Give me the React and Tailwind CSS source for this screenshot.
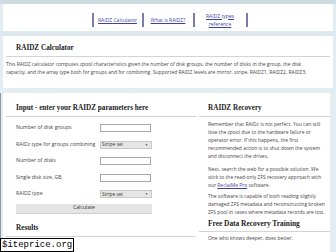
const FormRow = ({ label, children }) => (
  <div className="flex items-center h-[16.5px]">
    <span className="w-[84px] shrink-0">{label}</span>
    {children}
  </div>
);

const TextBox = () => (
  <div className="w-[51px] h-[8px] bg-white border border-[#a8a8a8]"></div>
);

const SelectBox = ({ value }) => (
  <div className="w-[52px] h-[8px] bg-[#e6e6e6] border border-[#c8c8c8] flex items-center justify-between pl-[1px] pr-[3px] text-[4.8px] text-[#333]">
    <span>{value}</span>
    <span className="text-[3px]">▼</span>
  </div>
);

const NavLink = ({ w, children }) => (
  <div className={`${w} h-[14px] border-l-2 border-[#7d7ca9] flex items-center justify-center text-center`}>
    <span className="underline text-[#3f3fa0] leading-[8px]">{children}</span>
  </div>
);

export default function App() {
  return (
    <div className="relative w-[336px] h-[252px] overflow-hidden bg-[#e3edf2] font-['Open_Sans',sans-serif] text-[4.95px] text-[#444]">
      <div className="h-[4px] bg-[#cddbe3]"></div>

      {/* nav */}
      <div className="mx-[3px] h-[27px] bg-white flex items-center justify-center pl-[3px]">
        <div className="flex items-center mt-[4px] border-r-2 border-[#7d7ca9] h-[14px] text-[5px]">
          <NavLink w="w-[50px]">RAIDZ Calculator</NavLink>
          <NavLink w="w-[51px]">What is RAIDZ?</NavLink>
          <NavLink w="w-[53px]">
            RAIDZ types
            <br />
            reference
          </NavLink>
        </div>
      </div>

      <div className="h-[5px] bg-[#dde8ef]"></div>

      {/* intro */}
      <div className="mx-[3px] h-[52px] bg-white px-[3px] pt-[7px]">
        <h1 className="ml-[10px] font-['Liberation_Serif',serif] font-bold text-[7.2px] leading-[10px] text-[#222]">
          RAIDZ Calculator
        </h1>
        <div className="mt-[3px] h-px bg-[#d4d4d4]"></div>
        <p className="mt-[3px] leading-[8px] pr-[14px]">
          This RAIDZ calculator computes zpool characteristics given the number of disk groups, the number of disks in the group, the disk capacity, and the array type both for groups and for combining. Supported RAIDZ levels are mirror, stripe, RAIDZ1, RAIDZ2, RAIDZ3.
        </p>
      </div>

      <div className="h-[5px]"></div>

      {/* columns */}
      <div className="relative mx-[3px] mr-[6px] flex bg-white h-[164px]">
        <div className="absolute left-[-3px] top-0 bottom-0 w-px bg-[#8d9aa3]"></div>
        <div className="w-[193px] pl-[3px] pt-[10px]">
          <h2 className="ml-[10px] font-['Liberation_Serif',serif] font-bold text-[7.2px] leading-[10px] text-[#222]">
            Input - enter your RAIDZ parameters here
          </h2>
          <div className="mt-[3px] h-px bg-[#d4d4d4]"></div>
          <div className="ml-[10px] mt-[3px] text-[5.2px] text-[#444]">
            <FormRow label="Number of disk groups">
              <TextBox />
            </FormRow>
            <FormRow label="RAIDz type for groups combining">
              <SelectBox value="Stripe set" />
            </FormRow>
            <FormRow label="Number of disks">
              <TextBox />
            </FormRow>
            <FormRow label="Single disk size, GB">
              <TextBox />
            </FormRow>
            <FormRow label="RAIDZ type">
              <SelectBox value="Stripe set" />
            </FormRow>
            <div className="mt-[1px] w-[136px] h-[10px] bg-[#e4e4e4] border-b border-[#cfcfcf] flex items-center justify-center text-[#333]">
              Calculate
            </div>
          </div>
          <h2 className="ml-[10px] mt-[9px] font-['Liberation_Serif',serif] font-bold text-[7.2px] leading-[10px] text-[#222]">
            Results
          </h2>
          <div className="mt-[3px] h-px bg-[#d4d4d4]"></div>
        </div>

        <div className="flex-1 pl-[3px] pt-[10px]">
          <h2 className="ml-[9px] font-['Liberation_Serif',serif] font-bold text-[7.2px] leading-[10px] text-[#222]">
            RAIDZ Recovery
          </h2>
          <div className="mt-[3px] h-px bg-[#d4d4d4]"></div>
          <div className="ml-[9px] mr-[5px] mt-[3px] leading-[8px]">
            <p>
              Remember that RAIDz is not perfect. You can still lose the zpool due to the hardware failure or operator error. If this happens, the first recommended action is to shut down the system and disconnect the drives.
            </p>
            <p className="mt-[5px]">
              Next, search the web for a possible solution. We stick to the read-only ZFS recovery approach with
              <br />
              our <span className="underline text-[#3f3fa0]">ReclaiMe Pro</span> software.
            </p>
            <p className="mt-[3px]">
              The software is capable of both reading slightly damaged ZFS metadata and reconstructing broken ZFS pool in cases where metadata records are lost.
            </p>
          </div>
          <h2 className="ml-[9px] mt-[2px] font-['Liberation_Serif',serif] font-bold text-[7.4px] leading-[11px] text-[#222]">
            Free Data Recovery Training
          </h2>
          <div className="mt-[2px] h-px bg-[#d4d4d4]"></div>
          <p className="ml-[9px] mt-[2px] leading-[8px]">One who knows deeper, does better.</p>
        </div>
      </div>

      {/* watermark */}
      <div className="absolute left-0 bottom-0 bg-white border border-black px-[1px] font-['Liberation_Mono',monospace] text-[9px] leading-[12px] text-black">
        $iteprice.org
      </div>
    </div>
  );
}
